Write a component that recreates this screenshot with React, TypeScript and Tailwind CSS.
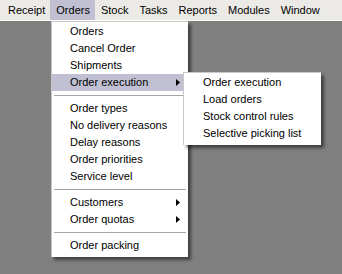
import { FC } from 'react';

type Item = { label: string; sub?: boolean; active?: boolean } | 'sep';

const topMenu = ['Receipt', 'Orders', 'Stock', 'Tasks', 'Reports', 'Modules', 'Window'];

const ordersMenu: Item[] = [
  { label: 'Orders' },
  { label: 'Cancel Order' },
  { label: 'Shipments' },
  { label: 'Order execution', sub: true, active: true },
  'sep',
  { label: 'Order types' },
  { label: 'No delivery reasons' },
  { label: 'Delay reasons' },
  { label: 'Order priorities' },
  { label: 'Service level' },
  'sep',
  { label: 'Customers', sub: true },
  { label: 'Order quotas', sub: true },
  'sep',
  { label: 'Order packing' },
];

const executionMenu = ['Order execution', 'Load orders', 'Stock control rules', 'Selective picking list'];

const Arrow: FC = () => (
  <svg width="4" height="7" viewBox="0 0 4 7" className="absolute right-[8px] top-[5px]">
    <path d="M0 0 L4 3.5 L0 7 Z" fill="#000" />
  </svg>
);

const App: FC = () => {
  return (
    <div
      className="relative w-[342px] h-[274px] bg-[#808080] overflow-hidden text-[11px] text-black"
      style={{ fontFamily: '"Liberation Sans", Arial, sans-serif' }}
    >
      {/* Menu bar */}
      <div className="flex h-[21px] bg-[#ebeae6] border-b border-white pl-[2px]">
        {topMenu.map((m) => (
          <div
            key={m}
            className={`flex items-center pl-[6px] pr-[5px] h-full leading-none ${m === 'Orders' ? 'bg-[#c1c0d3]' : ''}`}
          >
            {m}
          </div>
        ))}
      </div>

      {/* Orders dropdown */}
      <div className="absolute left-[51px] top-[21px] w-[137px] bg-white border-l border-t border-[#c8c8c8] pt-[1px] pb-[3px] shadow-[3px_3px_3px_rgba(0,0,0,0.5)]">
        {ordersMenu.map((it, i) =>
          it === 'sep' ? (
            <div key={i} className="h-[9px] flex items-center px-[2px]">
              <div className="h-px w-full bg-[#a6a6a6]" />
            </div>
          ) : (
            <div
              key={i}
              className={`relative h-[17px] flex items-center pl-[18px] whitespace-nowrap ${it.active ? 'bg-[#c1c0d3]' : ''}`}
            >
              {it.label}
              {it.sub && <Arrow />}
            </div>
          )
        )}
      </div>

      {/* Order execution submenu */}
      <div className="absolute left-[183px] top-[72px] w-[138px] bg-white border-l border-t border-[#c8c8c8] pt-[1px] pb-[3px] shadow-[3px_3px_3px_rgba(0,0,0,0.5)]">
        {executionMenu.map((s) => (
          <div key={s} className="h-[17px] flex items-center pl-[19px] whitespace-nowrap">
            {s}
          </div>
        ))}
      </div>
    </div>
  );
};

export default App;
